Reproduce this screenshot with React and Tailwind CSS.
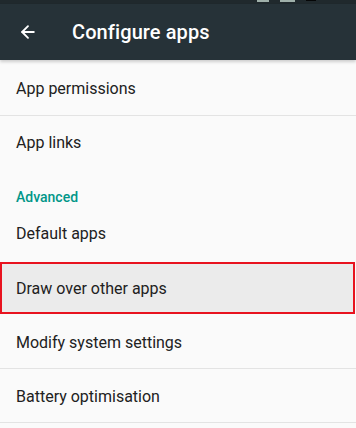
import { ArrowLeft } from "lucide-react";

const font = { fontFamily: "Roboto, 'Noto Sans', sans-serif" };

function Row({ label, divider = true, lower = false }) {
    return (
        <div className={`h-[54px] flex items-center pl-4 ${lower ? "pt-[3px]" : ""} ${divider ? "border-b border-[#e3e3e3]" : ""}`}>
            <span className="text-[16px] text-[#212121]">{label}</span>
        </div>
    );
}

export default function App() {
    return (
        <div className="w-[356px] h-[428px] overflow-hidden bg-[#fafafa]" style={font}>
            {/* Status bar, cut off */}
            <div className="h-[4px] bg-[#20292d] flex items-start pl-[257px] gap-[11px]">
                <div className="w-[12px] h-[2px] bg-[#9fb0aa]"></div>
                <div className="w-[15px] h-[2px] bg-[#9fb0aa]"></div>
                <div className="w-[10px] h-[1px] bg-[#050607]"></div>
            </div>

            {/* App bar */}
            <div className="h-[56px] bg-[#263238] flex items-center shadow-[0_2px_3px_rgba(0,0,0,0.18)] relative z-10">
                <div className="w-[72px] flex items-center pl-[18px]">
                    <ArrowLeft size={20} strokeWidth={2.2} className="text-white" />
                </div>
                <h1 className="text-[20px] font-medium text-white tracking-[0.1px]">Configure apps</h1>
            </div>

            <div className="flex flex-col pt-[2px]">
                <Row label="App permissions" />
                <Row label="App links" divider={false} />

                <div className="h-[37px] flex items-end pl-4">
                    <span className="text-[14px] leading-5 font-medium text-[#009688]">Advanced</span>
                </div>

                <Row label="Default apps" divider={false} />

                <div className="h-[54px] py-[1px]">
                    <div className="h-full border-2 border-[#e8131f] bg-[#ebebeb] flex items-center pl-[14px] pt-[2px] mr-px">
                        <span className="text-[16px] text-[#212121]">Draw over other apps</span>
                    </div>
                </div>

                <Row label="Modify system settings" lower />
                <Row label="Battery optimisation" lower />
            </div>
        </div>
    );
}
